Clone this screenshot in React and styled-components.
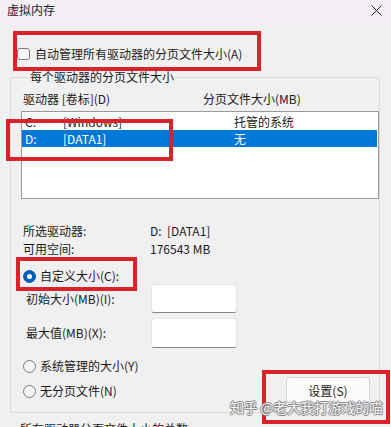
import React from "react";
import styled, { createGlobalStyle } from "styled-components";

const Global = createGlobalStyle`
  html, body { margin: 0; padding: 0; background: #f0f0f0; }
  body { font-family: "Noto Sans CJK SC", "Noto Sans", sans-serif; font-size: 12px; color: #1b1b1b; }
  * { box-sizing: border-box; }
`;

const Window = styled.div`
  position: relative;
  width: 391px;
  height: 427px;
  overflow: hidden;
  background: #f0f0f0;
  display: flex;
  flex-direction: column;
`;

const TitleBar = styled.div`
  height: 22px;
  padding: 0 0 2px 7px;
  background: #f3eff5;
  display: flex;
  align-items: center;
  justify-content: space-between;
  line-height: 16px;
`;

const CloseBtn = styled.div`
  width: 30px;
  height: 20px;
  display: flex;
  align-items: center;
  justify-content: center;
`;

const CheckRow = styled.label`
  display: flex;
  align-items: center;
  gap: 5px;
  height: 17px;
  margin: 23px 0 0 17px;
  line-height: 17px;
`;

const CheckBox = styled.span`
  width: 13px;
  height: 12px;
  border: 1px solid #7a7a7a;
  border-radius: 3px;
  background: #f8f8f8;
`;

const Group = styled.fieldset`
  margin: 7px 0 0 10px;
  width: 370px;
  padding: 6px 0 9px 10px;
  border: 1px solid #dadada;
  border-radius: 3px;
  min-width: 0;
`;

const Legend = styled.legend`
  padding: 0 1px;
  margin-left: 8px;
  line-height: 16px;
`;

const HeaderRow = styled.div`
  display: flex;
  height: 16px;
  line-height: 16px;
  padding-left: 2px;
`;

const HeaderCell = styled.span`
  width: ${(p) => p.$w}px;
  flex: none;
`;

const ListBox = styled.div`
  margin-top: 4px;
  height: 88px;
  border: 1px solid #9a9a9a;
  background: #fff;
  padding-top: 1px;
`;

const ListRow = styled.div`
  display: flex;
  height: 17px;
  line-height: 17px;
  padding-left: 3px;
  margin-right: 1px;
  background: ${(p) => (p.$selected ? "#0078d7" : "transparent")};
  color: ${(p) => (p.$selected ? "#fff" : "#1b1b1b")};
`;

const Cell = styled.span`
  width: ${(p) => p.$w}px;
  flex: none;
  white-space: pre;
`;

const InfoBlock = styled.div`
  margin-top: 23px;
  padding-left: 2px;
  display: flex;
  flex-direction: column;
`;

const InfoRow = styled.div`
  display: flex;
  height: 18px;
  line-height: 18px;
`;

const InfoLabel = styled.span`
  width: 127px;
  flex: none;
`;

const RadioRow = styled.label`
  display: flex;
  align-items: center;
  gap: 4px;
  height: ${(p) => p.$h || 18}px;
  line-height: 18px;
  padding-left: 2px;
`;

const Radio = styled.span`
  width: 13px;
  height: 13px;
  border-radius: 50%;
  flex: none;
  ${(p) =>
    p.$checked
      ? `background: #005fb8; border: 1px solid #005fb8; display:flex; align-items:center; justify-content:center;
         &::after { content: ""; width: 5px; height: 5px; border-radius: 50%; background: #fff; }`
      : `background: #f6f6f6; border: 1px solid #7a7a7a;`}
`;

const CustomBlock = styled.div`
  margin-top: 10px;
  display: flex;
  flex-direction: column;
`;

const FieldRow = styled.div`
  display: flex;
  align-items: center;
  height: ${(p) => p.$h}px;
  margin-top: ${(p) => p.$mt || 0}px;
  padding-left: 5px;
`;

const FieldLabel = styled.span`
  width: 125px;
  flex: none;
  line-height: 16px;
`;

const TextInput = styled.div`
  width: 86px;
  height: 100%;
  background: #fff;
  border: 1px solid #e6e6e6;
  border-bottom: 1px solid #868686;
  border-radius: 3px;
`;

const BottomSection = styled.div`
  margin-top: 9px;
  display: flex;
  justify-content: space-between;
  align-items: flex-start;
`;

const RadioColumn = styled.div`
  display: flex;
  flex-direction: column;
  gap: 7px;
`;

const Button = styled.button`
  margin: 20px 9px 0 0;
  width: 84px;
  height: 26px;
  background: #fbfbfb;
  border: 1px solid #d3d3d3;
  border-bottom-color: #c2c2c2;
  border-radius: 4px;
  font: inherit;
  color: #1b1b1b;
  padding: 0;
`;

const Footer = styled.div`
  margin: 8px 0 0 20px;
  line-height: 16px;
  white-space: nowrap;
`;

const Highlight = styled.div`
  position: absolute;
  left: ${(p) => p.$x}px;
  top: ${(p) => p.$y}px;
  width: ${(p) => p.$w}px;
  height: ${(p) => p.$h}px;
  border: 4px solid #d7242b;
  pointer-events: none;
`;

const Watermark = styled.div`
  position: absolute;
  left: 230px;
  top: 397px;
  font-size: 14px;
  line-height: 20px;
  color: #f2f2f2;
  letter-spacing: -0.3px;
  text-shadow: -1px 0 #8a8a8a, 1px 0 #8a8a8a, 0 -1px #8a8a8a, 0 1px #8a8a8a;
  white-space: nowrap;
  pointer-events: none;
`;

export default function App() {
  return (
    <>
      <Global />
      <Window>
        <TitleBar>
          <span>虚拟内存</span>
          <CloseBtn>
            <svg width="11" height="11" viewBox="0 0 11 11">
              <path d="M0.5 0.5 L10.5 10.5 M10.5 0.5 L0.5 10.5" stroke="#1f1f1f" strokeWidth="1" fill="none" />
            </svg>
          </CloseBtn>
        </TitleBar>

        <CheckRow>
          <CheckBox />
          <span>自动管理所有驱动器的分页文件大小(A)</span>
        </CheckRow>

        <Group>
          <Legend>每个驱动器的分页文件大小</Legend>
          <HeaderRow>
            <HeaderCell $w={180}>驱动器 [卷标](D)</HeaderCell>
            <HeaderCell $w={160}>分页文件大小(MB)</HeaderCell>
          </HeaderRow>
          <ListBox>
            <ListRow>
              <Cell $w={38}>C:</Cell>
              <Cell $w={171}>[Windows]</Cell>
              <Cell $w={100}>托管的系统</Cell>
            </ListRow>
            <ListRow $selected>
              <Cell $w={38}>D:</Cell>
              <Cell $w={171}>[DATA1]</Cell>
              <Cell $w={100}>无</Cell>
            </ListRow>
          </ListBox>

          <InfoBlock>
            <InfoRow>
              <InfoLabel>所选驱动器:</InfoLabel>
              <span>D:&nbsp;&nbsp;[DATA1]</span>
            </InfoRow>
            <InfoRow>
              <InfoLabel>可用空间:</InfoLabel>
              <span>176543 MB</span>
            </InfoRow>
          </InfoBlock>

          <CustomBlock>
            <RadioRow $h={16}>
              <Radio $checked />
              <span>自定义大小(C):</span>
            </RadioRow>
            <FieldRow $h={29}>
              <FieldLabel>初始大小(MB)(I):</FieldLabel>
              <TextInput />
            </FieldRow>
            <FieldRow $h={30} $mt={5}>
              <FieldLabel>最大值(MB)(X):</FieldLabel>
              <TextInput />
            </FieldRow>
          </CustomBlock>

          <BottomSection>
            <RadioColumn>
              <RadioRow>
                <Radio />
                <span>系统管理的大小(Y)</span>
              </RadioRow>
              <RadioRow>
                <Radio />
                <span>无分页文件(N)</span>
              </RadioRow>
            </RadioColumn>
            <Button>设置(S)</Button>
          </BottomSection>
        </Group>

        <Footer>所有驱动器分页文件大小的总数</Footer>

        <Highlight $x={13} $y={31} $w={248} $h={40} />
        <Highlight $x={6} $y={119} $w={167} $h={42} />
        <Highlight $x={16} $y={257} $w={121} $h={34} />
        <Highlight $x={262} $y={370} $w={128} $h={54} />
        <Watermark>知乎 @老大我打游戏的喵</Watermark>
      </Window>
    </>
  );
}
